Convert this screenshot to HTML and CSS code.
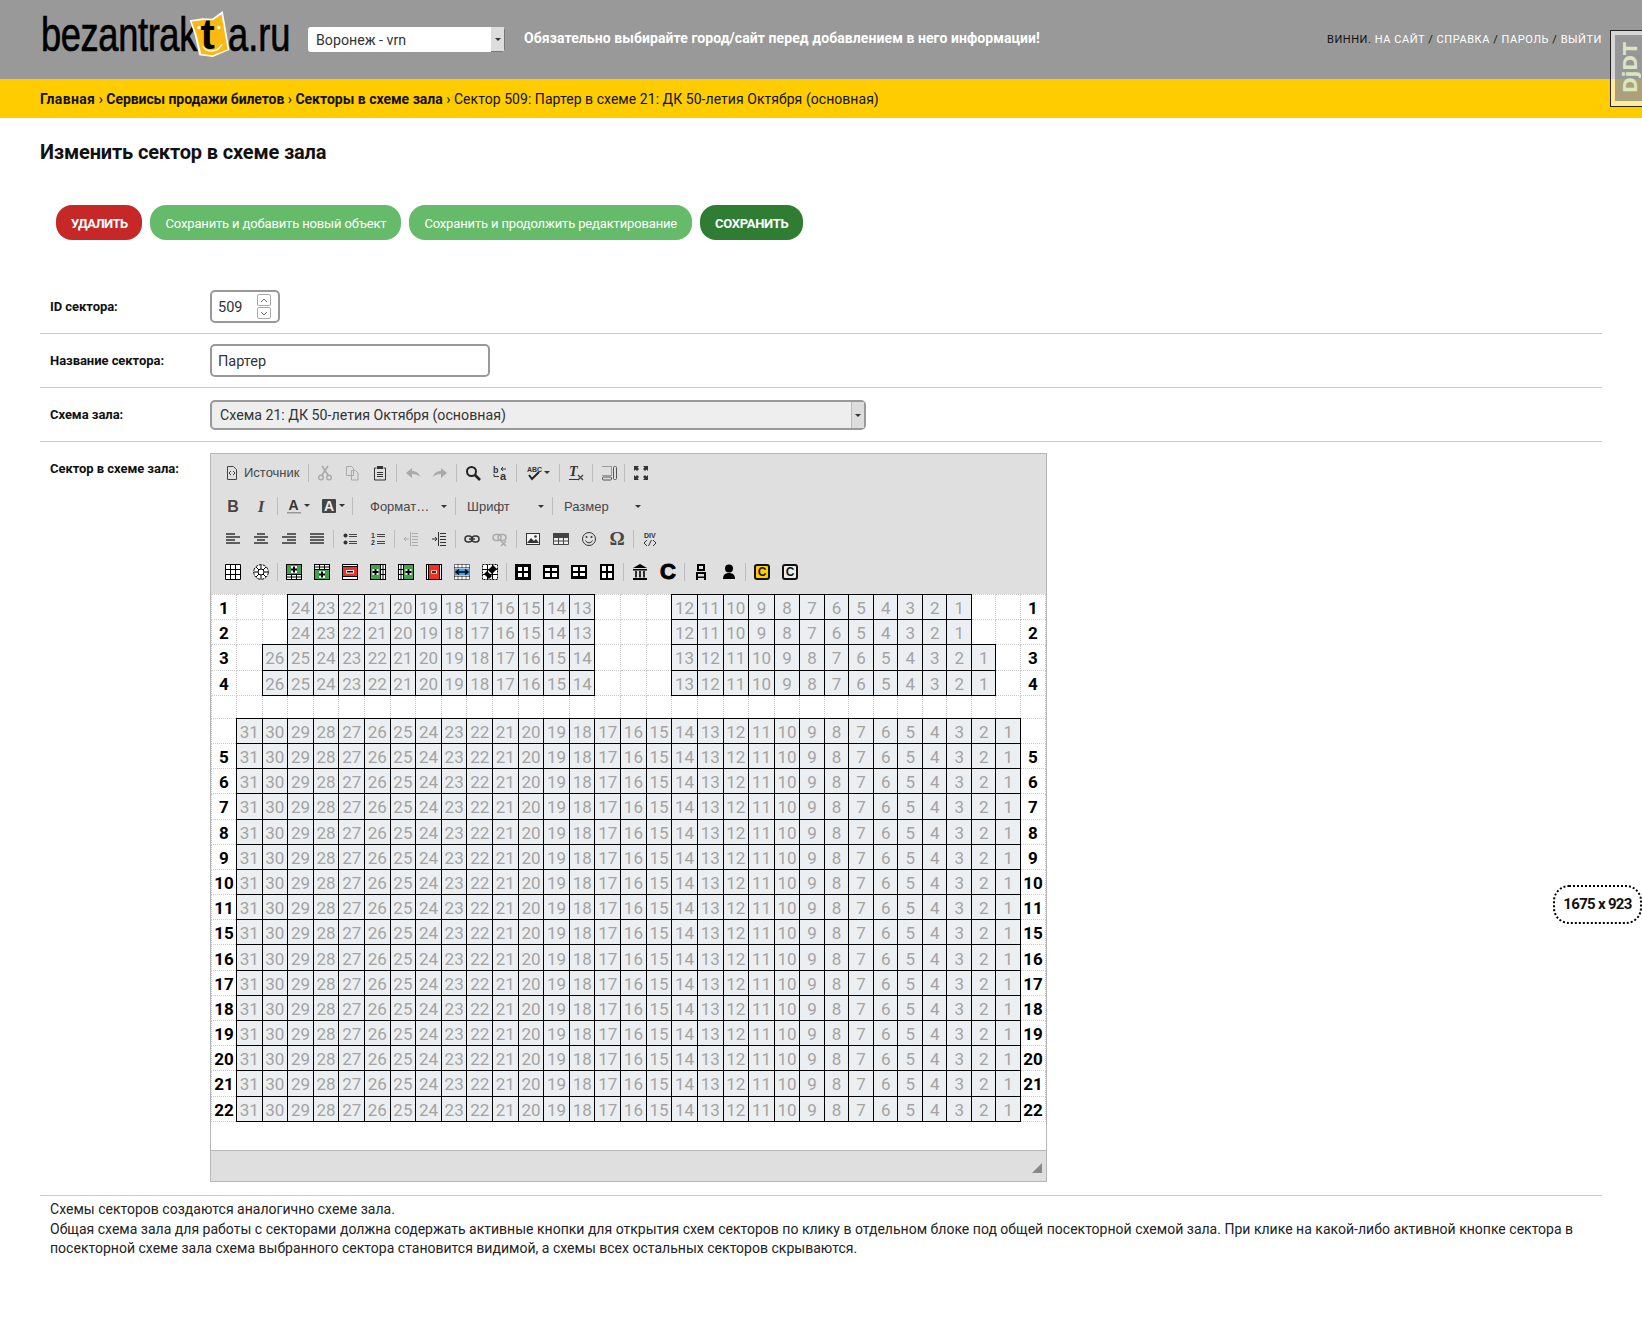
FILE: index.html
```html
<!DOCTYPE html>
<html lang="ru">
<head>
	<meta charset="UTF-8">
	<title>Изменить сектор в схеме зала</title>
	<link rel="stylesheet" href="styles.css">
</head>
<body>

<header class="top">
	<div class="logo"><span class="logo-text logo-left">bezantrak</span><span class="logo-mask">
		<svg viewBox="118 10 124 146" width="41" height="49">
			<path d="M120 40l40-6 28 1 32-23 7 40 13 78-50 21-41-5-14-62z" fill="#fff"/>
			<path d="M126 44l36-5 28 1 26-18 6 32 13 74-45 18-35-4-14-58z" fill="#fdb913"/>
			<text x="153" y="128" font-family="Liberation Sans" font-weight="bold" font-size="130" fill="#000">t</text>
			<path d="M160 118c12 22 44 20 58-6" fill="none" stroke="#fff" stroke-width="4"/>
			<circle cx="148" cy="62" r="5" fill="#fff"/><circle cx="208" cy="62" r="5" fill="#fff"/>
		</svg>
	</span><span class="logo-text logo-right">a.ru</span></div>
	<div class="site-select"><span class="site-name">Воронеж - vrn</span><span class="site-arrow"><i class="tri"></i></span></div>
	<div class="warning">Обязательно выбирайте город/сайт перед добавлением в него информации!</div>
	<div class="user-tools">ВИННИ. <a>НА САЙТ</a> / <a>СПРАВКА</a> / <a>ПАРОЛЬ</a> / <a>ВЫЙТИ</a></div>
</header>

<nav class="crumbs"><a class="crumb-home">Главная</a> › <a class="crumb-second">Сервисы продажи билетов</a> › <a>Секторы в схеме зала</a> › <span class="crumb-current">Сектор 509: Партер в схеме 21: ДК 50-летия Октября (основная)</span></nav>

<main class="content">
	<h1>Изменить сектор в схеме зала</h1>

	<div class="actions">
		<a class="btn-red">УДАЛИТЬ</a>
		<a class="btn-green">Сохранить и добавить новый объект</a>
		<a class="btn-green">Сохранить и продолжить редактирование</a>
		<a class="btn-dark">СОХРАНИТЬ</a>
	</div>

	<div class="row">
		<label>ID сектора:</label>
		<div class="box box-num">509<span class="spin"><i class="spin-btn"><svg viewBox="0 0 8 5" width="8" height="5"><path d="M1 4l3-3 3 3" fill="none" stroke="#777"/></svg></i><i class="spin-btn"><svg viewBox="0 0 8 5" width="8" height="5"><path d="M1 1l3 3 3-3" fill="none" stroke="#777"/></svg></i></span></div>
	</div>
	<div class="row">
		<label>Название сектора:</label>
		<div class="box box-text">Партер</div>
	</div>
	<div class="row row-select">
		<label>Схема зала:</label>
		<div class="box box-select">Схема 21: ДК 50-летия Октября (основная)<span class="select-arrow"><i class="tri"></i></span></div>
	</div>
	<div class="row row-editor">
		<label>Сектор в схеме зала:</label>
		<div class="editor">
			<div class="toolbar">
				<div class="tb-row tb-first">
					<span class="tb tb-source"><svg class="ico" viewBox="0 0 16 16"><path d="M3.5 1.5h6l3 3v10h-9z" fill="none" stroke="#444"/><path d="M7 6L5 8l2 2M9 6l2 2-2 2" fill="none" stroke="#444"/></svg>Источник</span>
					<i class="sep"></i>
					<span class="tb off"><svg class="ico" viewBox="0 0 16 16"><path d="M5 1l6 9M11 1L5 10" stroke="#333" stroke-width="1.6" fill="none"/><circle cx="4" cy="12.5" r="2.3" fill="none" stroke="#333" stroke-width="1.4"/><circle cx="12" cy="12.5" r="2.3" fill="none" stroke="#333" stroke-width="1.4"/></svg></span>
					<span class="tb off"><svg class="ico" viewBox="0 0 16 16"><path d="M2.5 1.5h5l2 2v7h-7zM7.5 5.5h4l2.5 2.500v7h-6.500z" fill="#dfdfdf" stroke="#333"/></svg></span>
					<span class="tb"><svg class="ico" viewBox="0 0 16 16"><path d="M4.500 3h-2v12h11V3h-2" fill="none" stroke="#333"/><rect x="5" y="1" width="6" height="3" fill="#333"/><path d="M5 7.500h6M5 9.500h6M5 11.500h6" stroke="#333"/></svg></span>
					<i class="sep"></i>
					<span class="tb off"><svg class="ico" viewBox="0 0 16 16"><path d="M1 8l6-5v3c4 0 7 2 8 6-2-2-4-3-8-3v4z" fill="#333"/></svg></span>
					<span class="tb off"><svg class="ico" viewBox="0 0 16 16"><path d="M15 8L9 3v3c-4 0-7 2-8 6 2-2 4-3 8-3v4z" fill="#333"/></svg></span>
					<i class="sep"></i>
					<span class="tb"><svg class="ico" viewBox="0 0 16 16"><circle cx="6.500" cy="6.500" r="4.500" fill="none" stroke="#222" stroke-width="2"/><path d="M10 10l5 5" stroke="#222" stroke-width="2.600"/></svg></span>
					<span class="tb"><svg class="ico" viewBox="0 0 16 16"><text class="ico-text" x="1" y="8" font-size="9">b</text><text class="ico-text" x="8" y="15" font-size="11">a</text><path d="M9 4h5M11 2L9 4l2 2M7 11.500H2V9" fill="none" stroke="#333"/></svg></span>
					<i class="sep"></i>
					<span class="tb tb-arrow"><svg class="ico" viewBox="0 0 16 16"><text class="ico-text" x="1" y="7" font-size="7">ABC</text><path d="M3 10l3 4 7-7" fill="none" stroke="#222" stroke-width="2"/></svg><i class="tri"></i></span>
					<i class="sep"></i>
					<span class="tb"><svg class="ico" viewBox="0 0 16 16"><text class="ico-i" x="1" y="11" font-size="14">T</text><path d="M1 14.500h9" stroke="#333"/><path d="M10 10l5 5M15 10l-5 5" stroke="#444" stroke-width="1.300"/></svg></span>
					<i class="sep"></i>
					<span class="tb"><svg class="ico" viewBox="0 0 16 16"><path d="M1.500 1.500h9v9h-9" fill="none" stroke="#555" stroke-dasharray="1 1"/><rect x="1.500" y="12" width="9" height="3" rx="1" fill="none" stroke="#555"/><rect x="12.500" y="1.500" width="3" height="13" rx="1" fill="none" stroke="#555"/></svg></span>
					<i class="sep"></i>
					<span class="tb"><svg class="ico" viewBox="0 0 16 16"><path d="M1 1h5L4.500 2.500 6 4 4 6 2.500 4.500 1 6zM15 1v5l-1.500-1.500L12 6l-2-2 1.500-1.500L10 1zM1 15v-5l1.500 1.500L4 10l2 2-1.500 1.500L6 15zM15 15h-5l1.500-1.500L10 12l2-2 1.500 1.500L15 10z" fill="#333"/></svg></span>
				</div>
				<div class="tb-row">
					<span class="tb tb-letter tb-b">B</span>
					<span class="tb tb-letter tb-i">I</span>
					<i class="sep"></i>
					<span class="tb tb-arrow"><svg class="ico" viewBox="0 0 16 16"><text class="ico-text" x="2.500" y="12" font-size="14">A</text><rect x="1" y="14" width="14" height="1.500" fill="#999"/></svg><i class="tri"></i></span>
					<span class="tb tb-arrow"><svg class="ico" viewBox="0 0 16 16"><rect x="1" y="1" width="14" height="14" rx="1" fill="#444"/><text x="3" y="13" font-size="14" font-family="Liberation Sans" font-weight="bold" fill="#eee">A</text></svg><i class="tri"></i></span>
					<i class="sep"></i>
					<span class="combo combo-format">Формат…<i class="tri"></i></span>
					<i class="sep"></i>
					<span class="combo">Шрифт<i class="tri"></i></span>
					<i class="sep"></i>
					<span class="combo">Размер<i class="tri"></i></span>
				</div>
				<div class="tb-row">
					<span class="tb"><svg class="ico" viewBox="0 0 16 16"><path d="M1 3h9M1 6h14M1 9h9M1 12h14" stroke="#333" stroke-width="1.500"/></svg></span>
					<span class="tb"><svg class="ico" viewBox="0 0 16 16"><path d="M4 3h8M1 6h14M4 9h8M1 12h14" stroke="#333" stroke-width="1.500"/></svg></span>
					<span class="tb"><svg class="ico" viewBox="0 0 16 16"><path d="M6 3h9M1 6h14M6 9h9M1 12h14" stroke="#333" stroke-width="1.500"/></svg></span>
					<span class="tb"><svg class="ico" viewBox="0 0 16 16"><path d="M1 3h14M1 6h14M1 9h14M1 12h14" stroke="#333" stroke-width="1.500"/></svg></span>
					<i class="sep"></i>
					<span class="tb"><svg class="ico" viewBox="0 0 16 16"><circle cx="3.500" cy="4.500" r="2" fill="#333"/><circle cx="3.500" cy="11.500" r="2" fill="#333"/><path d="M7 3.500h8M7 5.500h8M7 10.500h8M7 12.500h8" stroke="#444"/></svg></span>
					<span class="tb"><svg class="ico" viewBox="0 0 16 16"><text class="ico-text" x="1" y="7" font-size="7">1</text><text class="ico-text" x="1" y="14" font-size="7">2</text><path d="M7 3.500h8M7 5.500h8M7 10.500h8M7 12.500h8" stroke="#444"/></svg></span>
					<i class="sep"></i>
					<span class="tb off"><svg class="ico" viewBox="0 0 16 16"><path d="M7.500 1v14M9 2.500h6M9 5.500h6M9 8.500h6M9 11.500h6M9 14.500h6M1 8h5M3 6L1 8l2 2" fill="none" stroke="#333"/></svg></span>
					<span class="tb"><svg class="ico" viewBox="0 0 16 16"><path d="M7.500 1v14M9 2.500h6M9 5.500h6M9 8.500h6M9 11.500h6M9 14.500h6M1 8h5M4 6l2 2-2 2" fill="none" stroke="#333"/></svg></span>
					<i class="sep"></i>
					<span class="tb"><svg class="ico" viewBox="0 0 16 16"><rect x="1" y="5" width="7" height="6" rx="3" fill="none" stroke="#333" stroke-width="1.500"/><rect x="8" y="5" width="7" height="6" rx="3" fill="none" stroke="#333" stroke-width="1.500"/><path d="M5 8h6" stroke="#333" stroke-width="1.500"/></svg></span>
					<span class="tb off"><svg class="ico" viewBox="0 0 16 16"><rect x="1" y="3.500" width="8" height="6" rx="3" fill="none" stroke="#333" stroke-width="1.500"/><rect x="6" y="3.500" width="8" height="6" rx="3" fill="none" stroke="#333" stroke-width="1.500"/><path d="M9 10l5 5M14 10l-5 5" stroke="#333" stroke-width="1.500"/></svg></span>
					<i class="sep"></i>
					<span class="tb"><svg class="ico" viewBox="0 0 16 16"><rect x="1.500" y="2.500" width="13" height="11" fill="#f4f4f4" stroke="#333"/><path d="M2 12l4-5 3 3 2-2 3 4z" fill="#333"/><circle cx="10.500" cy="5.500" r="1.300" fill="#333"/></svg></span>
					<span class="tb"><svg class="ico" viewBox="0 0 16 16"><path d="M.5 2.500h15v11H.5zM.5 6.500h15M.5 10h15M5.500 6.500v7M10.500 6.500v7" fill="#eee" stroke="#444"/><rect y="2" width="16" height="4" fill="#444"/></svg></span>
					<span class="tb"><svg class="ico" viewBox="0 0 16 16"><circle cx="8" cy="8" r="6.500" fill="none" stroke="#333"/><circle cx="5.500" cy="6" r="1" fill="#333"/><circle cx="10.500" cy="6" r="1" fill="#333"/><path d="M4.500 9.500c1.500 3 5.500 3 7 0" fill="none" stroke="#333"/></svg></span>
					<span class="tb tb-letter tb-omega">Ω</span>
					<i class="sep"></i>
					<span class="tb"><svg class="ico" viewBox="0 0 16 16"><text class="ico-text" x="2" y="7" font-size="7">DIV</text><path d="M5 9l-3 3 3 3M11 9l3 3-3 3M9.500 9l-3 6" fill="none" stroke="#333"/></svg></span>
				</div>
				<div class="tb-row">
					<span class="tb"><svg class="ico" viewBox="0 0 16 16"><path d="M.5.5h15v15H.5zM.5 5.500h15M.5 10.500h15M5.500.5v15M10.500.5v15" fill="#fff" stroke="#000"/></svg></span>
					<span class="tb"><svg class="ico" viewBox="0 0 16 16"><circle cx="8" cy="8" r="7.300" fill="#fff" stroke="#000" stroke-dasharray="3 1"/><circle cx="8" cy="8" r="3" fill="none" stroke="#000"/><path d="M8 1v4M8 11v4M1 8h4M11 8h4M3 3l3 3M10 10l3 3M13 3l-3 3M6 10l-3 3" stroke="#000"/></svg></span>
					<i class="sep"></i>
					<span class="tb"><svg class="ico" viewBox="0 0 16 16"><rect x=".5" y=".5" width="15" height="15" fill="#fff" stroke="#000"/><rect x="1" y="1" width="14" height="9" fill="#3fa34d"/><path d="M.5 10.500h15M.5 13h15M5.500 10.500v5M10.500 10.500v5" stroke="#000"/><rect x="5" y="2" width="6" height="7" fill="#fff"/><path d="M8 2.500v6M5 5.500h6" stroke="#000" stroke-width="2"/></svg></span>
					<span class="tb"><svg class="ico" viewBox="0 0 16 16"><rect x=".5" y=".5" width="15" height="15" fill="#fff" stroke="#000"/><rect x="1" y="6" width="14" height="9" fill="#3fa34d"/><path d="M.5 3h15M.5 5.500h15M5.500.5v5M10.500.5v5" stroke="#000"/><rect x="5" y="7" width="6" height="7" fill="#fff"/><path d="M8 7.500v6M5 10.500h6" stroke="#000" stroke-width="2"/></svg></span>
					<span class="tb"><svg class="ico" viewBox="0 0 16 16"><rect x=".5" y=".5" width="15" height="15" fill="#fff" stroke="#000"/><rect x="1" y="3" width="14" height="9" fill="#ee3124"/><rect x="4" y="6" width="8" height="3.500" fill="#fff"/><path d="M5 7.700h6" stroke="#000" stroke-width="1.600"/><path d="M.5 2.500h15M.5 12.500h15" stroke="#000"/></svg></span>
					<span class="tb"><svg class="ico" viewBox="0 0 16 16"><rect x=".5" y=".5" width="15" height="15" fill="#fff" stroke="#000"/><rect x="1" y="1" width="9" height="14" fill="#3fa34d"/><path d="M10.500.5v15M13 .5v15M10.500 5.500h5M10.500 10.500h5" stroke="#000"/><rect x="2.500" y="5" width="6" height="6" fill="#fff"/><path d="M5.500 5v6M2.500 8h6" stroke="#000" stroke-width="2"/></svg></span>
					<span class="tb"><svg class="ico" viewBox="0 0 16 16"><rect x=".5" y=".5" width="15" height="15" fill="#fff" stroke="#000"/><rect x="6" y="1" width="9" height="14" fill="#3fa34d"/><path d="M5.500.5v15M3 .5v15M.5 5.500h5M.5 10.500h5" stroke="#000"/><rect x="7.500" y="5" width="6" height="6" fill="#fff"/><path d="M10.500 5v6M7.500 8h6" stroke="#000" stroke-width="2"/></svg></span>
					<span class="tb"><svg class="ico" viewBox="0 0 16 16"><rect x=".5" y=".5" width="15" height="15" fill="#fff" stroke="#000"/><rect x="3" y="1" width="10" height="14" fill="#ee3124"/><rect x="5" y="6.500" width="6" height="3" fill="#fff"/><path d="M6 8h4" stroke="#000" stroke-width="1.600"/><path d="M2.500.5v15M13.500.5v15" stroke="#000"/></svg></span>
					<span class="tb"><svg class="ico" viewBox="0 0 16 16"><rect x=".5" y=".5" width="15" height="15" fill="#fff" stroke="#000" stroke-dasharray="1 1"/><path d="M.5 3.500h15M.5 12.500h15M4 .5v3M8 .5v3M12 .5v3M4 12.500v3M8 12.500v3M12 12.500v3" stroke="#000" stroke-dasharray="1 1"/><rect x="1" y="4.500" width="14" height="7" fill="#4a9fe0"/><path d="M2 8h12M5 5.500L2 8l3 2.500M11 5.500L14 8l-3 2.500" fill="none" stroke="#000" stroke-width="1.400"/></svg></span>
					<span class="tb"><svg class="ico" viewBox="0 0 16 16"><rect x=".5" y=".5" width="15" height="15" fill="#fff" stroke="#000" stroke-dasharray="2 1"/><path d="M.5 5.500h15M.5 10.500h15M5.500.5v15M10.500.5v15" stroke="#000"/><path d="M2 10l3-3 5 5-3 3zM6 6l5-5 4 4-5 5z" fill="#000"/></svg></span>
					<i class="sep"></i>
					<span class="tb"><svg class="ico" viewBox="0 0 16 16"><rect width="16" height="16" fill="#000"/><path d="M3 3h4v4H3zM9 3h4v4H9zM3 9h4v4H3zM9 9h4v4H9z" fill="#fff"/></svg></span>
					<span class="tb"><svg class="ico" viewBox="0 0 16 16"><rect y="1" width="16" height="14" fill="#000"/><path d="M2 4h5v3H2zM9 4h5v3H9zM2 9h5v4H2zM9 9h5v4H9z" fill="#fff"/></svg></span>
					<span class="tb"><svg class="ico" viewBox="0 0 16 16"><rect y="1" width="16" height="14" fill="#000"/><path d="M2 3h5v4H2zM9 3h5v4H9zM2 9h5v3H2zM9 9h5v3H9z" fill="#fff"/></svg></span>
					<span class="tb"><svg class="ico" viewBox="0 0 16 16"><rect x="1" width="14" height="16" fill="#000"/><path d="M3 2h4v5H3zM9 2h4v5H9zM3 9h4v5H3zM9 9h4v5H9z" fill="#fff"/></svg></span>
					<i class="sep"></i>
					<span class="tb"><svg class="ico" viewBox="0 0 16 16"><path d="M8 0l7 4H1zM1 5h14v1.500H1zM1 14h14v2H1z" fill="#000"/><path d="M4 7v6.500M8 7v6.500M12 7v6.500" stroke="#000" stroke-width="1.600"/></svg></span>
					<span class="tb tb-letter tb-bigc">C</span>
					<i class="sep"></i>
					<span class="tb"><svg class="ico" viewBox="0 0 16 16"><path d="M4 0h8v7H4zM3 8h10v2H3zM3 10h2v6H3zM11 10h2v6h-2zM5 12.500h6v1.500H5z" fill="#000"/><path d="M6 2h4v3H6z" fill="#dfdfdf"/></svg></span>
					<span class="tb"><svg class="ico" viewBox="0 0 16 16"><circle cx="8" cy="4.500" r="4" fill="#000"/><path d="M2 15c0-4 2-6 6-6s6 2 6 6z" fill="#000"/></svg></span>
					<i class="sep"></i>
					<span class="tb"><span class="c-badge c-yellow">C</span></span>
					<span class="tb"><span class="c-badge">C</span></span>
				</div>
			</div>

			<div class="editor-body">
				<table class="seats">
					<tr><th>1</th><td class="e"></td><td class="e"></td><td>24</td><td>23</td><td>22</td><td>21</td><td>20</td><td>19</td><td>18</td><td>17</td><td>16</td><td>15</td><td>14</td><td>13</td><td class="e"></td><td class="e"></td><td class="e"></td><td>12</td><td>11</td><td>10</td><td>9</td><td>8</td><td>7</td><td>6</td><td>5</td><td>4</td><td>3</td><td>2</td><td>1</td><td class="e"></td><td class="e"></td><th>1</th></tr>
					<tr><th>2</th><td class="e"></td><td class="e"></td><td>24</td><td>23</td><td>22</td><td>21</td><td>20</td><td>19</td><td>18</td><td>17</td><td>16</td><td>15</td><td>14</td><td>13</td><td class="e"></td><td class="e"></td><td class="e"></td><td>12</td><td>11</td><td>10</td><td>9</td><td>8</td><td>7</td><td>6</td><td>5</td><td>4</td><td>3</td><td>2</td><td>1</td><td class="e"></td><td class="e"></td><th>2</th></tr>
					<tr><th>3</th><td class="e"></td><td>26</td><td>25</td><td>24</td><td>23</td><td>22</td><td>21</td><td>20</td><td>19</td><td>18</td><td>17</td><td>16</td><td>15</td><td>14</td><td class="e"></td><td class="e"></td><td class="e"></td><td>13</td><td>12</td><td>11</td><td>10</td><td>9</td><td>8</td><td>7</td><td>6</td><td>5</td><td>4</td><td>3</td><td>2</td><td>1</td><td class="e"></td><th>3</th></tr>
					<tr><th>4</th><td class="e"></td><td>26</td><td>25</td><td>24</td><td>23</td><td>22</td><td>21</td><td>20</td><td>19</td><td>18</td><td>17</td><td>16</td><td>15</td><td>14</td><td class="e"></td><td class="e"></td><td class="e"></td><td>13</td><td>12</td><td>11</td><td>10</td><td>9</td><td>8</td><td>7</td><td>6</td><td>5</td><td>4</td><td>3</td><td>2</td><td>1</td><td class="e"></td><th>4</th></tr>
					<tr class="blank"><th></th><td class="e"></td><td class="e"></td><td class="e"></td><td class="e"></td><td class="e"></td><td class="e"></td><td class="e"></td><td class="e"></td><td class="e"></td><td class="e"></td><td class="e"></td><td class="e"></td><td class="e"></td><td class="e"></td><td class="e"></td><td class="e"></td><td class="e"></td><td class="e"></td><td class="e"></td><td class="e"></td><td class="e"></td><td class="e"></td><td class="e"></td><td class="e"></td><td class="e"></td><td class="e"></td><td class="e"></td><td class="e"></td><td class="e"></td><td class="e"></td><td class="e"></td><th></th></tr>
					<tr><th></th><td>31</td><td>30</td><td>29</td><td>28</td><td>27</td><td>26</td><td>25</td><td>24</td><td>23</td><td>22</td><td>21</td><td>20</td><td>19</td><td>18</td><td>17</td><td>16</td><td>15</td><td>14</td><td>13</td><td>12</td><td>11</td><td>10</td><td>9</td><td>8</td><td>7</td><td>6</td><td>5</td><td>4</td><td>3</td><td>2</td><td>1</td><th></th></tr>
					<tr><th>5</th><td>31</td><td>30</td><td>29</td><td>28</td><td>27</td><td>26</td><td>25</td><td>24</td><td>23</td><td>22</td><td>21</td><td>20</td><td>19</td><td>18</td><td>17</td><td>16</td><td>15</td><td>14</td><td>13</td><td>12</td><td>11</td><td>10</td><td>9</td><td>8</td><td>7</td><td>6</td><td>5</td><td>4</td><td>3</td><td>2</td><td>1</td><th>5</th></tr>
					<tr><th>6</th><td>31</td><td>30</td><td>29</td><td>28</td><td>27</td><td>26</td><td>25</td><td>24</td><td>23</td><td>22</td><td>21</td><td>20</td><td>19</td><td>18</td><td>17</td><td>16</td><td>15</td><td>14</td><td>13</td><td>12</td><td>11</td><td>10</td><td>9</td><td>8</td><td>7</td><td>6</td><td>5</td><td>4</td><td>3</td><td>2</td><td>1</td><th>6</th></tr>
					<tr><th>7</th><td>31</td><td>30</td><td>29</td><td>28</td><td>27</td><td>26</td><td>25</td><td>24</td><td>23</td><td>22</td><td>21</td><td>20</td><td>19</td><td>18</td><td>17</td><td>16</td><td>15</td><td>14</td><td>13</td><td>12</td><td>11</td><td>10</td><td>9</td><td>8</td><td>7</td><td>6</td><td>5</td><td>4</td><td>3</td><td>2</td><td>1</td><th>7</th></tr>
					<tr><th>8</th><td>31</td><td>30</td><td>29</td><td>28</td><td>27</td><td>26</td><td>25</td><td>24</td><td>23</td><td>22</td><td>21</td><td>20</td><td>19</td><td>18</td><td>17</td><td>16</td><td>15</td><td>14</td><td>13</td><td>12</td><td>11</td><td>10</td><td>9</td><td>8</td><td>7</td><td>6</td><td>5</td><td>4</td><td>3</td><td>2</td><td>1</td><th>8</th></tr>
					<tr><th>9</th><td>31</td><td>30</td><td>29</td><td>28</td><td>27</td><td>26</td><td>25</td><td>24</td><td>23</td><td>22</td><td>21</td><td>20</td><td>19</td><td>18</td><td>17</td><td>16</td><td>15</td><td>14</td><td>13</td><td>12</td><td>11</td><td>10</td><td>9</td><td>8</td><td>7</td><td>6</td><td>5</td><td>4</td><td>3</td><td>2</td><td>1</td><th>9</th></tr>
					<tr><th>10</th><td>31</td><td>30</td><td>29</td><td>28</td><td>27</td><td>26</td><td>25</td><td>24</td><td>23</td><td>22</td><td>21</td><td>20</td><td>19</td><td>18</td><td>17</td><td>16</td><td>15</td><td>14</td><td>13</td><td>12</td><td>11</td><td>10</td><td>9</td><td>8</td><td>7</td><td>6</td><td>5</td><td>4</td><td>3</td><td>2</td><td>1</td><th>10</th></tr>
					<tr><th>11</th><td>31</td><td>30</td><td>29</td><td>28</td><td>27</td><td>26</td><td>25</td><td>24</td><td>23</td><td>22</td><td>21</td><td>20</td><td>19</td><td>18</td><td>17</td><td>16</td><td>15</td><td>14</td><td>13</td><td>12</td><td>11</td><td>10</td><td>9</td><td>8</td><td>7</td><td>6</td><td>5</td><td>4</td><td>3</td><td>2</td><td>1</td><th>11</th></tr>
					<tr><th>15</th><td>31</td><td>30</td><td>29</td><td>28</td><td>27</td><td>26</td><td>25</td><td>24</td><td>23</td><td>22</td><td>21</td><td>20</td><td>19</td><td>18</td><td>17</td><td>16</td><td>15</td><td>14</td><td>13</td><td>12</td><td>11</td><td>10</td><td>9</td><td>8</td><td>7</td><td>6</td><td>5</td><td>4</td><td>3</td><td>2</td><td>1</td><th>15</th></tr>
					<tr><th>16</th><td>31</td><td>30</td><td>29</td><td>28</td><td>27</td><td>26</td><td>25</td><td>24</td><td>23</td><td>22</td><td>21</td><td>20</td><td>19</td><td>18</td><td>17</td><td>16</td><td>15</td><td>14</td><td>13</td><td>12</td><td>11</td><td>10</td><td>9</td><td>8</td><td>7</td><td>6</td><td>5</td><td>4</td><td>3</td><td>2</td><td>1</td><th>16</th></tr>
					<tr><th>17</th><td>31</td><td>30</td><td>29</td><td>28</td><td>27</td><td>26</td><td>25</td><td>24</td><td>23</td><td>22</td><td>21</td><td>20</td><td>19</td><td>18</td><td>17</td><td>16</td><td>15</td><td>14</td><td>13</td><td>12</td><td>11</td><td>10</td><td>9</td><td>8</td><td>7</td><td>6</td><td>5</td><td>4</td><td>3</td><td>2</td><td>1</td><th>17</th></tr>
					<tr><th>18</th><td>31</td><td>30</td><td>29</td><td>28</td><td>27</td><td>26</td><td>25</td><td>24</td><td>23</td><td>22</td><td>21</td><td>20</td><td>19</td><td>18</td><td>17</td><td>16</td><td>15</td><td>14</td><td>13</td><td>12</td><td>11</td><td>10</td><td>9</td><td>8</td><td>7</td><td>6</td><td>5</td><td>4</td><td>3</td><td>2</td><td>1</td><th>18</th></tr>
					<tr><th>19</th><td>31</td><td>30</td><td>29</td><td>28</td><td>27</td><td>26</td><td>25</td><td>24</td><td>23</td><td>22</td><td>21</td><td>20</td><td>19</td><td>18</td><td>17</td><td>16</td><td>15</td><td>14</td><td>13</td><td>12</td><td>11</td><td>10</td><td>9</td><td>8</td><td>7</td><td>6</td><td>5</td><td>4</td><td>3</td><td>2</td><td>1</td><th>19</th></tr>
					<tr><th>20</th><td>31</td><td>30</td><td>29</td><td>28</td><td>27</td><td>26</td><td>25</td><td>24</td><td>23</td><td>22</td><td>21</td><td>20</td><td>19</td><td>18</td><td>17</td><td>16</td><td>15</td><td>14</td><td>13</td><td>12</td><td>11</td><td>10</td><td>9</td><td>8</td><td>7</td><td>6</td><td>5</td><td>4</td><td>3</td><td>2</td><td>1</td><th>20</th></tr>
					<tr><th>21</th><td>31</td><td>30</td><td>29</td><td>28</td><td>27</td><td>26</td><td>25</td><td>24</td><td>23</td><td>22</td><td>21</td><td>20</td><td>19</td><td>18</td><td>17</td><td>16</td><td>15</td><td>14</td><td>13</td><td>12</td><td>11</td><td>10</td><td>9</td><td>8</td><td>7</td><td>6</td><td>5</td><td>4</td><td>3</td><td>2</td><td>1</td><th>21</th></tr>
					<tr><th>22</th><td>31</td><td>30</td><td>29</td><td>28</td><td>27</td><td>26</td><td>25</td><td>24</td><td>23</td><td>22</td><td>21</td><td>20</td><td>19</td><td>18</td><td>17</td><td>16</td><td>15</td><td>14</td><td>13</td><td>12</td><td>11</td><td>10</td><td>9</td><td>8</td><td>7</td><td>6</td><td>5</td><td>4</td><td>3</td><td>2</td><td>1</td><th>22</th></tr>
				</table>
			</div>
			<div class="editor-foot"><i class="resizer"></i></div>
		</div>
	</div>
	<div class="help">Схемы секторов создаются аналогично схеме зала.<br>Общая схема зала для работы с секторами должна содержать активные кнопки для открытия схем секторов по клику в отдельном блоке под общей посекторной схемой зала. При клике на какой-либо активной кнопке сектора в посекторной схеме зала схема выбранного сектора становится видимой, а схемы всех остальных секторов скрываются.</div>
</main>

<!-- overlays: debug toolbar handle and window size badge -->
<div class="djdt"><div class="djdt-inner"><span class="djdt-text">DjDT</span></div></div>
<div class="size-badge">1675 x 923</div>

</body>
</html>
```

FILE: styles.css
```css
html, body {
	margin: 0;
	padding: 0;
}

body {
	position: relative;
	height: 1341px;
	overflow: hidden;
	background: #fff;
	color: #111;
	font-family: Roboto, "Liberation Sans", sans-serif;
	font-size: 14px;
}

/* header */
.top {
	display: flex;
	align-items: center;
	height: 79px;
	padding: 0 40px 0 41px;
	background: #999;
}

.logo {
	display: flex;
	flex: none;
	align-self: flex-start;
	align-items: center;
	width: 267px;
	height: 68px;
	color: #000;
	font-family: "Liberation Sans", sans-serif;
	font-size: 49px;
}

.logo-text {
	display: inline-block;
	flex: none;
	transform-origin: left center;
	-webkit-text-stroke: .7px #000;
}

.logo-left {
	width: 158px;
	transform: scaleX(.74);
	letter-spacing: -.5px;
}

.logo-right {
	width: 61px;
	transform: scaleX(.74);
}

.logo-mask {
	display: block;
	flex: none;
	width: 41px;
	height: 49px;
	margin-left: -10px;
	margin-right: -2px;
	position: relative;
	z-index: 1;
}

.logo-mask svg {
	display: block;
}

.site-select {
	display: flex;
	flex: none;
	width: 197px;
	height: 25px;
	background: #fff;
	border-radius: 3px;
	color: #333;
	font-size: 14.200px;
	line-height: 27px;
	overflow: hidden;
}

.site-name {
	flex: 1;
	padding-left: 8px;
}

.site-arrow {
	display: flex;
	align-items: center;
	justify-content: center;
	width: 13px;
	background: #ddd;
	border-right: 1px solid #777;
	border-bottom: 1px solid #777;
}

.tri {
	display: inline-block;
	width: 0;
	height: 0;
	border-top: 3px solid #333;
	border-left: 3px solid transparent;
	border-right: 3px solid transparent;
}

.warning {
	margin-left: 19px;
	margin-bottom: 3px;
	color: #fff;
	font-size: 14px;
	font-weight: bold;
	letter-spacing: .08px;
}

.user-tools {
	margin-left: auto;
	margin-bottom: 1px;
	color: #111;
	font-size: 11px;
	letter-spacing: .55px;
}

.user-tools a {
	color: #fff;
}

.crumbs {
	height: 39px;
	padding: 0 40px;
	background: #fc0;
	color: #111;
	font-size: 14px;
	line-height: 41px;
}

.crumbs a {
	font-weight: bold;
}

.crumbs .crumb-home {
	letter-spacing: .35px;
}

.crumbs .crumb-second {
	letter-spacing: -.08px;
}

.crumb-current {
	letter-spacing: .05px;
}

/* page */
.content {
	padding: 0 40px;
}

h1 {
	margin: 0;
	padding-top: 22px;
	font-size: 20px;
	font-weight: bold;
	letter-spacing: -.15px;
	line-height: 24px;
}

.actions {
	display: flex;
	gap: 8px;
	height: 35px;
	margin-top: 41px;
	margin-bottom: 40px;
	padding-left: 16px;
}

.actions a {
	padding: 0 15px;
	border-radius: 16px;
	color: #fff;
	font-size: 13px;
	letter-spacing: -.13px;
	line-height: 37px;
}

.actions .btn-red {
	background: #c62828;
	font-weight: bold;
	letter-spacing: -.6px;
}

.actions .btn-green {
	background: #66bb6a;
	letter-spacing: -.15px;
}

.actions .btn-dark {
	background: #2e7d32;
	font-weight: bold;
	letter-spacing: -.3px;
}

.row {
	display: flex;
	padding: 10px 0;
	border-bottom: 1px solid #ccc;
}

.row label {
	flex: none;
	width: 160px;
	padding-left: 10px;
	color: #111;
	font-size: 13px;
	font-weight: bold;
	letter-spacing: -.05px;
	line-height: 33px;
}

.row:first-of-type {
	padding-top: 0;
}

.box {
	box-sizing: border-box;
	border: 2px solid #999;
	border-radius: 5px;
	background: #fff;
	color: #333;
	font-size: 14.500px;
	line-height: 31px;
}

.box-num {
	display: flex;
	justify-content: space-between;
	width: 70px;
	height: 33px;
	padding-left: 6px;
}

.spin {
	display: flex;
	flex-direction: column;
	gap: 1px;
	margin: 2px 7px 0 0;
}

.spin-btn {
	display: flex;
	align-items: center;
	justify-content: center;
	box-sizing: border-box;
	width: 14px;
	height: 12px;
	border: 1px solid #aaa;
	border-radius: 2px;
}

.box-text {
	width: 280px;
	height: 33px;
	padding-left: 6px;
}

.row-select {
	padding-top: 12px;
	padding-bottom: 11px;
}

.row-select label {
	line-height: 29px;
}

.box-select {
	display: flex;
	justify-content: space-between;
	width: 656px;
	height: 30px;
	padding-left: 8px;
	background: #eee;
	font-size: 14.200px;
	line-height: 26px;
}

.select-arrow {
	display: flex;
	align-items: center;
	justify-content: center;
	width: 12px;
	background: #ddd;
	border-left: 1px solid #bbb;
}

/* editor */
.row-editor {
	padding-top: 11px;
	padding-bottom: 13px;
}

.row-editor label {
	line-height: 31px;
}

.editor {
	box-sizing: border-box;
	width: 837px;
	border: 1px solid #b6b6b6;
	background: #fff;
}

.toolbar {
	height: 140px;
	box-sizing: border-box;
	padding: 2px 0 0 8px;
	background: #dfdfdf;
}

.tb-row {
	display: flex;
	align-items: center;
	height: 33px;
}

.tb {
	display: flex;
	flex: none;
	align-items: center;
	justify-content: center;
	width: 28px;
	height: 24px;
	color: #474747;
}

.tb-first .tb {
	width: 27.600px;
}

.tb-first .tb-source {
	justify-content: flex-start;
	width: 87px;
	padding-left: 5px;
	box-sizing: border-box;
	gap: 4px;
	font-family: "Liberation Sans", sans-serif;
	font-size: 13px;
}

.tb.off {
	opacity: .3;
}

.tb-first .tb-arrow {
	width: 38px;
}

.tb-arrow {
	gap: 2px;
	width: 35px;
}

.ico {
	display: block;
	flex: none;
	width: 16px;
	height: 16px;
}

.ico-text {
	font-family: "Liberation Sans", sans-serif;
	font-weight: bold;
	fill: #333;
}

.ico-i {
	font-family: "Liberation Serif", serif;
	font-weight: bold;
	font-style: italic;
	fill: #333;
}

.sep {
	flex: none;
	width: 1px;
	height: 18px;
	margin: 0 2px;
	background: #bcbcbc;
}

.tb-letter {
	font-family: "Liberation Serif", serif;
	font-weight: bold;
}

.tb-b {
	font-family: "Liberation Sans", sans-serif;
	font-size: 16px;
	padding-top: 2px;
	height: 22px;
}

.tb-i {
	font-style: italic;
	font-size: 17px;
	padding-top: 2px;
	height: 22px;
}

.tb-omega {
	font-size: 19px;
}

.tb-bigc {
	color: #000;
	font-family: "Liberation Sans", sans-serif;
	font-size: 22px;
	font-weight: bold;
	-webkit-text-stroke: 1px #000;
}

.c-badge {
	box-sizing: border-box;
	width: 16px;
	height: 16px;
	border: 2px solid #111;
	border-radius: 3px;
	background: #eee;
	color: #111;
	font-family: "Liberation Sans", sans-serif;
	font-size: 12px;
	font-weight: bold;
	line-height: 12px;
	text-align: center;
}

.c-yellow {
	background: #fc0;
}

.combo {
	display: flex;
	flex: none;
	align-items: center;
	justify-content: space-between;
	box-sizing: border-box;
	width: 92px;
	height: 22px;
	margin-top: 2px;
	padding: 0 6px 0 9px;
	color: #474747;
	font-family: "Liberation Sans", sans-serif;
	font-size: 13px;
}

.combo-format {
	width: 98px;
	padding-left: 15px;
}

.editor-body {
	height: 556px;
}

.seats {
	width: 835px;
	border-collapse: collapse;
	font-size: 17px;
}

.seats td, .seats th {
	height: 22.200px;
	padding: 2px 0 0;
	border: 1px dotted #ccc;
	text-align: center;
}

.seats td {
	width: 18.100px;
	padding: 2px 2.750px 0;
	border: 1px solid #000;
	background: #eceff1;
	color: #a3a3a3;
}

.seats td.e {
	border: 1px dotted #ccc;
	background: #fff;
}

.seats th {
	width: 24px;
	color: #000;
	font-weight: bold;
}

.seats .blank td, .seats .blank th {
	height: 20px;
}

.editor-foot {
	display: flex;
	align-items: flex-end;
	justify-content: flex-end;
	box-sizing: border-box;
	height: 31px;
	padding: 0 4px 8px 0;
	border-top: 1px solid #b6b6b6;
	background: #dfdfdf;
}

.resizer {
	width: 0;
	height: 0;
	border-left: 10px solid transparent;
	border-bottom: 10px solid #888;
}

.help {
	padding: 4px 10px 0;
	color: #222;
	font-size: 14px;
	letter-spacing: .015px;
	line-height: 19.500px;
}

/* things lying over the page */
.djdt {
	position: absolute;
	top: 30px;
	right: 0;
	box-sizing: border-box;
	width: 32px;
	height: 77px;
	padding: 4px 0 5px 4px;
	border: 1px solid #222;
	border-right: 0;
	background: rgba(255, 255, 255, .6);
}

.djdt-inner {
	display: flex;
	align-items: center;
	justify-content: center;
	height: 100%;
	padding-left: 3px;
	background: rgba(100, 100, 100, .55);
	overflow: hidden;
}

.djdt-text {
	color: rgba(240, 255, 210, .75);
	font-family: "DejaVu Sans", sans-serif;
	font-size: 19px;
	font-weight: bold;
	line-height: 22px;
	writing-mode: vertical-rl;
	transform: rotate(180deg);
}

.size-badge {
	position: absolute;
	top: 885px;
	right: 0;
	box-sizing: border-box;
	width: 89px;
	height: 39px;
	border: 2px dotted #000;
	border-radius: 16px;
	color: #111;
	font-size: 15px;
	font-weight: bold;
	letter-spacing: -.7px;
	line-height: 35px;
	text-align: center;
}
```
